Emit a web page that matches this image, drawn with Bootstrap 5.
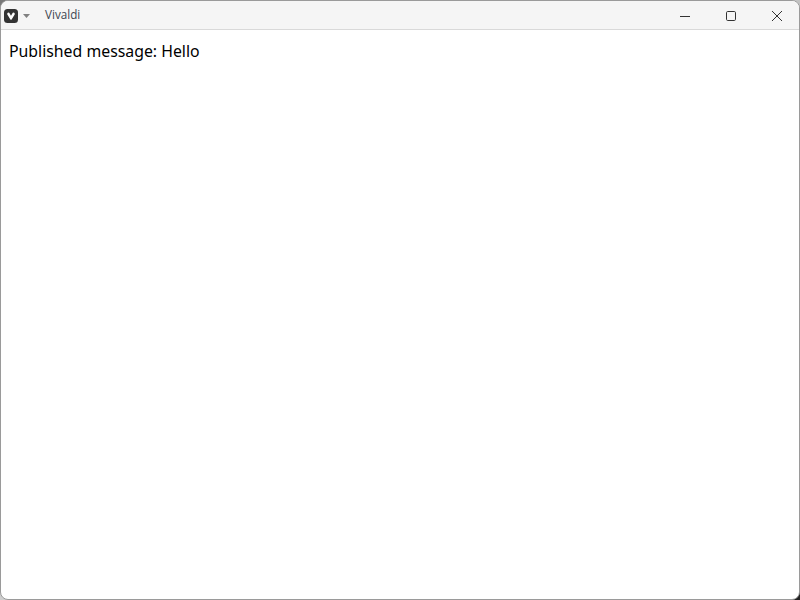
<!DOCTYPE html>
<html lang="en">
<head>
  <meta charset="UTF-8" />
  <meta name="viewport" content="width=device-width, initial-scale=1.0"/>
  <title>Vivaldi</title>
  <link href="https://cdn.jsdelivr.net/npm/bootstrap@5.3.2/dist/css/bootstrap.min.css" rel="stylesheet">
  <style>
    html, body {
      height: 100%;
    }

    body {
      background: linear-gradient(135deg, #777 0%, #ddd 50%, #222 100%);
      overflow: hidden;
    }

    .app-window {
      height: 600px;
      background: #fff;
      border: 1px solid #9a9a9a;
      border-radius: 8px;
      overflow: hidden;
    }

    .title-bar {
      height: 29px;
      flex: none;
      background: #f5f5f5;
      border-bottom: 1px solid #d9d9d9;
    }

    .app-logo {
      width: 14px;
      height: 14px;
      margin-left: 3px;
      margin-top: 1px;
    }

    .app-caret {
      width: 7px;
      height: 4px;
      margin-left: 5px;
      margin-top: 1px;
    }

    .app-name {
      margin-left: 15px;
      color: #3f4650;
      font: 11.7px/1 "Open Sans", "Liberation Sans", sans-serif;
    }

    .win-btn {
      width: 46px;
      height: 29px;
      padding: 0;
      border: 0;
      background: transparent;
    }

    .win-btn svg {
      display: block;
      width: 10px;
      height: 10px;
      margin: 1px auto 0;
    }

    .win-controls {
      margin-right: -1px;
    }

    .page-text {
      margin: 0;
      padding: 10px 8px;
      color: #000;
      font: 15.84px/22px "Noto Sans", "Liberation Sans", sans-serif;
    }
  </style>
</head>
<body>
  <div class="app-window d-flex flex-column">
    <div class="title-bar d-flex align-items-center">
      <svg class="app-logo" viewBox="0 0 14 14" aria-hidden="true">
        <rect width="14" height="14" rx="3.5" fill="#333"/>
        <path d="M3.2 5.2 6.2 10.2Q7 11.3 7.8 10.2L10.8 5.2Q11 3.6 9.5 3.6 8.7 3.6 8.3 4.4L7 6.8 5.7 4.4Q5.3 3.6 4.5 3.6 3 3.6 3.2 5.2Z" fill="#fff"/>
      </svg>
      <svg class="app-caret" viewBox="0 0 7 4" aria-hidden="true"><path d="M0 0H7L3.5 4Z" fill="#808080"/></svg>
      <span class="app-name">Vivaldi</span>
      <div class="win-controls d-flex ms-auto">
        <button class="win-btn" type="button" aria-label="Minimize">
          <svg viewBox="0 0 10 10"><path d="M0 5.5H10" stroke="#333" fill="none"/></svg>
        </button>
        <button class="win-btn" type="button" aria-label="Maximize">
          <svg viewBox="0 0 10 10"><rect x=".5" y=".5" width="9" height="9" rx="1.2" stroke="#333" fill="none"/></svg>
        </button>
        <button class="win-btn" type="button" aria-label="Close">
          <svg viewBox="0 0 10 10"><path d="M0 0 10 10M10 0 0 10" stroke="#333" fill="none"/></svg>
        </button>
      </div>
    </div>
    <p class="page-text">Published message: Hello</p>
  </div>
  <script src="https://cdn.jsdelivr.net/npm/bootstrap@5.3.2/dist/js/bootstrap.bundle.min.js"></script>
</body>
</html>
